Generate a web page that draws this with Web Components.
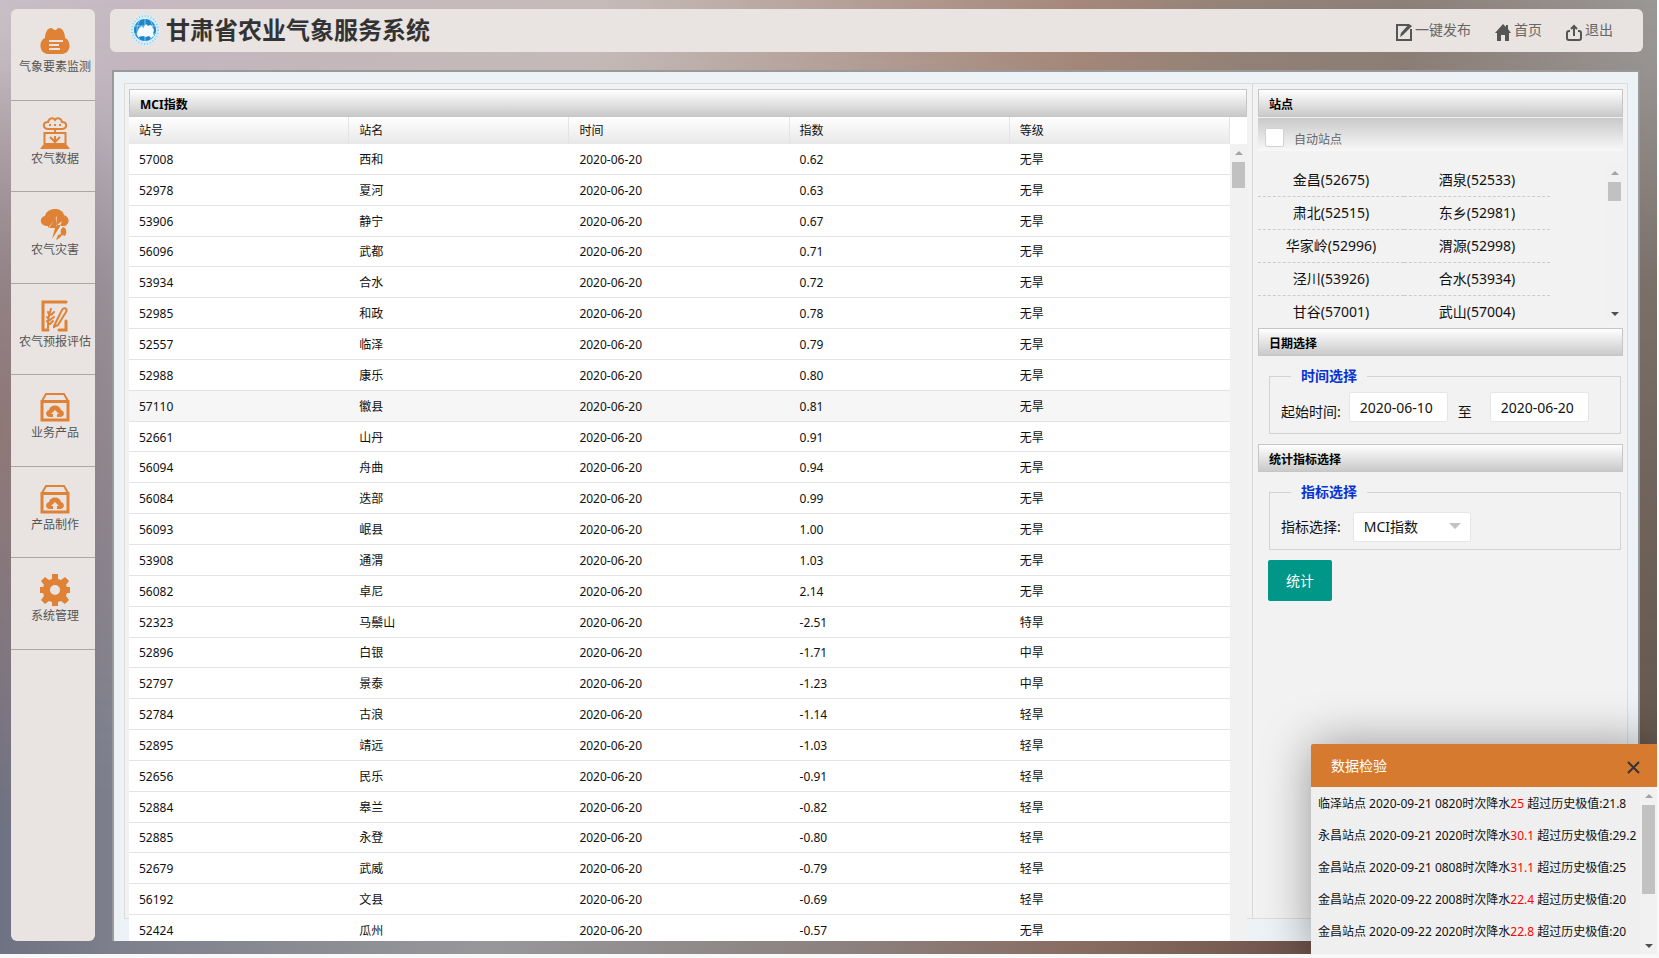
<!DOCTYPE html>
<html lang="zh-CN">
<head>
<meta charset="utf-8">
<title>甘肃省农业气象服务系统</title>
<style>
html, body { height: 100%; margin: 0; background: #f8f8f9; }
body { font: 12px/20px "Noto Sans", "Noto Sans CJK SC", sans-serif; color: #111; }
</style>
</head>
<body>
<weather-app></weather-app>

<script>
const define = (name, html, setup) => {
  const tpl = document.createElement('template');
  tpl.innerHTML = html;
  customElements.define(name, class extends HTMLElement {
    constructor() {
      super();
      this.attachShadow({ mode: 'open' }).append(tpl.content.cloneNode(true));
    }
    connectedCallback() { if (setup) setup(this, this.shadowRoot); }
  });
};

const O = '#df8236';
const box = `<path fill="none" stroke="${O}" stroke-width="2" d="M2 10 6 3h18l4 7"/><path fill="none" stroke="${O}" stroke-width="3" d="M2 10.500h26v18.500H2z"/><path fill="${O}" d="M10 26c-5 0-5-6-1-7 1-6 11-6 12 0 4 1 4 7-1 7h-3v-3h2l-4-4-4 4h2v3z"/>`;
const ICONS = {
  cloud: `<path fill="${O}" d="M8 29C-2 28-1 15 5 13 5 7 8 3 11 3c2 0 2 2 4 2s2-2 4-2c3 0 6 4 6 10 6 2 7 15-3 16z"/><path stroke="#e9e4e1" stroke-width="2" d="M9 16h14M9 20h10M9 24h11"/>`,
  station: `<path fill="none" stroke="${O}" stroke-width="2" d="M8 12c-6-1-5-7 0-7 1-4 5-5 7-2 2-3 6-2 7 2 5 0 6 6 0 7zM15 12v3M4.500 16h21v11h-21z"/><path fill="${O}" d="M9 7h2v2H9zM14 7h2v2h-2zM19 7h2v2h-2zM3 28h24l3 4H0zM14 19h2v6h-2z"/><path fill="none" stroke="${O}" stroke-width="2" d="m10 20 5 5 5-5"/>`,
  storm: `<path fill="${O}" d="M8 18C-1 18-1 9 5 8 7-1 22-1 24 7c6 2 6 9 1 11l-5 0 2-5-6 5 0-8-8 10zM17 8 9 20l6 0-3 11 9-14h-5zM23 19c4 1 4 6 2 9l-3-1c-2 3-4 4-6 5l2-5 3-1c-1-3 0-5 2-7z"/>`,
  report: `<path fill="none" stroke="${O}" stroke-width="3" stroke-linecap="round" d="M26 2H3v28h5M19 30h7V21"/><path fill="none" stroke="${O}" stroke-width="2" stroke-linecap="round" d="m14 26 8-16c2-3 6-2 4 2L18 25l-4 2zM8 28c0-8 1-14 3-19M9 20l-2-3M9 24l-2-3M10 20l4-3M10 24l3-3M9 15l-1-3M11 15l3-3"/>`,
  box,
  gear: `<path fill="${O}" fill-rule="evenodd" d="M12 0h6v5l3 1 4-3 4 4-3 4 1 2h3v6h-3l-1 3 3 4-4 4-4-3-3 1v4h-6v-4l-3-1-4 3-4-4 3-4-1-3H0v-6h3l1-2-3-4 4-4 4 3 3-1zM15 11a5 5 0 1 0 0 10 5 5 0 0 0 0-10z"/>`
};

define('side-item', `<style>
:host { display: block; border-bottom: 1px solid #aaa8a6; box-sizing: border-box; }
a { display: flex; flex-direction: column; align-items: center; padding: 16px 0 0 4px; color: #555; text-decoration: none; white-space: nowrap; }
svg { width: 30px; height: 32px; display: block; }
</style><a href="#"><svg viewBox="0 0 30 32"></svg><slot></slot></a>`,
(el, root) => { root.querySelector('svg').innerHTML = ICONS[el.getAttribute('icon')]; });

define('side-nav', `<style>
:host { display: block; background: #e9e4e1; border-radius: 6px; }
nav { display: grid; grid-template-rows: repeat(7, 1fr); height: 641px; }
</style><nav>
<side-item icon="cloud">气象要素监测</side-item><side-item icon="station">农气数据</side-item>
<side-item icon="storm">农气灾害</side-item><side-item icon="report">农气预报评估</side-item>
<side-item icon="box">业务产品</side-item><side-item icon="box">产品制作</side-item>
<side-item icon="gear">系统管理</side-item></nav>`);

define('top-bar', `<style>
:host { display: flex; align-items: center; justify-content: space-between; height: 43px; box-sizing: border-box; padding: 0 30px 2px 20px; background: #e9e4e1; border-radius: 6px; }
.brand { display: flex; align-items: center; gap: 6px; }
h1 { margin: 0; font-size: 24px; line-height: 40px; font-weight: 700; color: #333; }
nav { display: flex; gap: 24px; font-size: 14px; }
a { display: flex; align-items: center; gap: 3px; color: #666; text-decoration: none; }
svg { display: block; }
a svg { margin-top: 4px; }
</style>
<div class="brand"><svg width="30" height="34" viewBox="0 0 30 34">
<ellipse cx="15" cy="17" rx="15" ry="16" fill="#d9eef7"/><ellipse cx="15" cy="17" rx="13" ry="14" fill="none" stroke="#8ccbe6" stroke-width="2" stroke-dasharray="1 2"/>
<circle cx="15" cy="17" r="11" fill="#1b86cc"/><path fill="none" stroke="#8cc8ea" d="M5 13h20M5 21h20M15 6v22M10 7c-4 6-4 14 0 20M20 7c4 6 4 14 0 20"/>
<path fill="#f4fafd" d="m7 20 2-5 3-2 1 2 3-4 2 2 3-1 3 5-1 3 1 3-3 2-2-2-3 1-3-1-5 1z"/></svg>
<h1>甘肃省农业气象服务系统</h1></div>
<nav>
<a href="#"><svg width="16" height="18" viewBox="0 0 16 18"><path fill="none" stroke="#555" stroke-width="2" d="M13 2H1v15h14V6"/><path fill="#555" d="m4 14 1-4 8-9 3 2-9 9z"/></svg>一键发布</a>
<a href="#"><svg width="16" height="18" viewBox="0 0 16 18"><path fill="#555" d="m8 1 3 3V2h2v4l3 4h-2v8h-4v-6H6v6H2v-8H0z"/></svg>首页</a>
<a href="#"><svg width="16" height="18" viewBox="0 0 16 18"><path fill="none" stroke="#555" stroke-width="2" d="M4 8H3Q1 8 1 10v5q0 2 2 2h10q2 0 2-2v-5q0-2-2-2h-1M8 13V3M5 6l3-3 3 3"/></svg>退出</a>
</nav>`);

define('title-strip', `<style>
:host { display: block; height: 28px; box-sizing: border-box; padding: 0 10px; border: 1px solid #c6c6c6; background: linear-gradient(#fff, #c9c9c9); line-height: 29px; font-weight: 700; color: #000; }
</style><slot></slot>`);

define('scroll-rail', `<style>
:host { display: flex; flex-direction: column; align-items: center; width: 17px; box-sizing: border-box; padding: 7px 0 6px; background: #f1f1f1; }
i { border: 4px solid transparent; border-top-width: 0; border-bottom-color: #a3a3a3; }
b { width: 13px; margin-top: 7px; height: var(--thumb, 26px); background: #c1c1c1; }
u { margin-top: auto; border: 4px solid transparent; border-bottom-width: 0; border-top-color: #505050; }
:host([cut]) u { display: none; }
</style><i></i><b></b><u></u>`);

const ROWS = `57008 西和 0.62 无旱|52978 夏河 0.63 无旱|53906 静宁 0.67 无旱|56096 武都 0.71 无旱|53934 合水 0.72 无旱|52985 和政 0.78 无旱|52557 临泽 0.79 无旱|52988 康乐 0.80 无旱|57110 徽县 0.81 无旱|52661 山丹 0.91 无旱|56094 舟曲 0.94 无旱|56084 迭部 0.99 无旱|56093 岷县 1.00 无旱|53908 通渭 1.03 无旱|56082 卓尼 2.14 无旱|52323 马鬃山 -2.51 特旱|52896 白银 -1.71 中旱|52797 景泰 -1.23 中旱|52784 古浪 -1.14 轻旱|52895 靖远 -1.03 轻旱|52656 民乐 -0.91 轻旱|52884 皋兰 -0.82 轻旱|52885 永登 -0.80 轻旱|52679 武威 -0.79 轻旱|56192 文县 -0.69 轻旱|52424 瓜州 -0.57 无旱`.split('|').map(r => r.split(' '));

define('index-table', `<style>
:host { display: flex; flex-direction: column; min-height: 0; }
.scroll { flex: 1; min-height: 0; display: grid; grid-template-columns: 1fr 17px; overflow: hidden; background: #fff; }
.view { min-height: 0; overflow: hidden; }
table { width: 100%; height: 829px; border-collapse: separate; border-spacing: 0; table-layout: fixed; }
th { height: 27px; padding: 0 10px; box-sizing: border-box; text-align: left; font-weight: 400; background: linear-gradient(#fff, #e8e8e8); border-right: 1px solid #e4e4e4; line-height: 20px; }
td { padding: 2px 10px 0; border-bottom: 1px solid #e4e4e4; line-height: 20px; }
tr.on td { background: #f6f6f6; }
scroll-rail { margin-top: 27px; }
</style><title-strip>MCI指数</title-strip>
<div class="scroll"><div class="view"><table><thead><tr><th>站号</th><th>站名</th><th>时间</th><th>指数</th><th>等级</th></tr></thead><tbody></tbody></table></div><scroll-rail cut></scroll-rail></div>`,
(el, root) => {
  root.querySelector('tbody').innerHTML = ROWS.map(([id, name, v, lv]) =>
    `<tr${id === '57110' ? ' class="on"' : ''}><td>${id}</td><td>${name}</td><td>2020-06-20</td><td>${v}</td><td>${lv}</td></tr>`).join('');
});

define('station-list', `<style>
:host { display: block; }
label { display: flex; align-items: center; gap: 10px; height: 33px; margin-top: 1px; padding: 6px 7px 0; box-sizing: border-box; background: linear-gradient(#c9c9c9, #f8f8f8); color: #666; }
input { appearance: none; width: 19px; height: 19px; margin: 0; box-sizing: border-box; background: #fff; border: 1px solid #d2d2d2; border-radius: 2px; }
span { padding-top: 4px; }
.list { display: flex; justify-content: space-between; height: 158px; margin: 13px 0 6px; overflow: hidden; }
ul { list-style: none; margin: 0; padding: 0; width: 80%; display: grid; grid-template-columns: 1fr 1fr; grid-auto-rows: 33px; font-size: 14px; }
li { box-sizing: border-box; text-align: center; line-height: 32px; border-bottom: 1px dashed #ccc; }
</style>
<label><input type="checkbox"><span>自动站点</span></label>
<div class="list"><ul><li>金昌(52675)</li><li>酒泉(52533)</li><li>肃北(52515)</li><li>东乡(52981)</li><li>华家岭(52996)</li><li>渭源(52998)</li><li>泾川(53926)</li><li>合水(53934)</li><li>甘谷(57001)</li><li>武山(57004)</li></ul>
<scroll-rail style="--thumb:19px"></scroll-rail></div>`);

define('query-form', `<style>
:host { display: block; font-size: 14px; }
title-strip { font-size: 12px; }
fieldset { margin: 10px 2px 10px 11px; padding: 0 11px; border: 1px solid #d2d2d2; height: 68px; box-sizing: border-box; min-width: 0; }
legend { margin-left: 10px; padding: 0 10px; line-height: 20px; color: #0a32d2; font-weight: 700; }
.row { display: flex; align-items: center; margin-top: 6px; }
label, .to { padding-top: 9px; }
input, select { height: 30px; box-sizing: border-box; border: 1px solid #e6e6e6; border-radius: 2px; background: #fff; font: inherit; color: #111; padding: 0 10px; margin: 0; }
input { width: 99px; }
label + input { margin-left: 8px; }
.to { margin: 0 10px; }
.pick { margin-left: 12px; position: relative; }
select { width: 118px; appearance: none; display: block; }
.pick::after { content: ""; position: absolute; right: 10px; top: 11px; border: 6px solid transparent; border-bottom-width: 0; border-top-color: #c2c2c2; }
.measure { margin-top: 10px; }
.measure label { padding-top: 0; }
button { margin-left: 10px; width: 64px; height: 41px; border: 0; border-radius: 2px; background: #009688; color: #fff; font: inherit; padding: 0; }
</style>
<title-strip>日期选择</title-strip>
<fieldset><legend>时间选择</legend><div class="row"><label for="from">起始时间:</label><input id="from" value="2020-06-10"><label class="to" for="to">至</label><input id="to" value="2020-06-20"></div></fieldset>
<title-strip>统计指标选择</title-strip>
<fieldset><legend>指标选择</legend><div class="row measure"><label for="idx">指标选择:</label><div class="pick"><select id="idx"><option>MCI指数</option></select></div></div></fieldset>
<button type="button">统计</button>`);

define('alert-popup', `<style>
:host { display: block; width: 346px; height: 210px; box-sizing: border-box; background: #efefef; border-radius: 2px 2px 0 0; box-shadow: 1px 1px 50px rgba(0,0,0,.4); overflow: hidden; }
header { display: flex; justify-content: space-between; align-items: center; height: 43px; padding: 0 17px 0 20px; background: #d57a2f; color: #fff; font-size: 14px; }
button { border: 0; padding: 0; background: none; display: block; margin-top: 4px; }
svg { display: block; }
.body { display: flex; justify-content: space-between; height: 167px; }
ul { list-style: none; margin: 0; padding: 1px 0 0 7px; white-space: nowrap; }
li { line-height: 32px; }
em { font-style: normal; color: #f00; }
</style>
<header><span>数据检验</span><button aria-label="关闭"><svg width="13" height="13" viewBox="0 0 13 13"><path stroke="#333" stroke-width="2" d="m1 1 11 11M12 1 1 12"/></svg></button></header>
<div class="body"><ul>
<li>临泽站点 2020-09-21 0820时次降水<em>25</em> 超过历史极值:21.8</li>
<li>永昌站点 2020-09-21 2020时次降水<em>30.1</em> 超过历史极值:29.2</li>
<li>金昌站点 2020-09-21 0808时次降水<em>31.1</em> 超过历史极值:25</li>
<li>金昌站点 2020-09-22 2008时次降水<em>22.4</em> 超过历史极值:20</li>
<li>金昌站点 2020-09-22 2020时次降水<em>22.8</em> 超过历史极值:20</li></ul>
<scroll-rail style="--thumb:89px"></scroll-rail></div>`);

define('weather-app', `<style>
:host { display: grid; grid-template-columns: 84px 1fr; gap: 15px; height: calc(100vh - 4px); margin-right: 2px; box-sizing: border-box; padding: 9px 14px 13px 11px; position: relative; isolation: isolate; overflow: hidden;
  background: linear-gradient(90deg, #6f7282, #7d7f8c 7%, #97979a 29%, #8c8280 50%, #886b60 66%, #6b5149 80%, #64574c); }
/* the lighter sky tones, fading out towards the ground */
:host::before { content: ""; position: absolute; inset: 0; z-index: -1;
  background: linear-gradient(90deg, #c8bfc6, #c7b8c1 8%, #c6bbb9 36%, #b0998f 55%, #a5887a 65%, #938378 75%, #8d8078 85%, #9a9796);
  -webkit-mask-image: linear-gradient(#000, rgba(0,0,0,.95) 7%, rgba(0,0,0,.4) 30%, rgba(0,0,0,.15) 60%, transparent 85%);
  mask-image: linear-gradient(#000, rgba(0,0,0,.95) 7%, rgba(0,0,0,.4) 30%, rgba(0,0,0,.15) 60%, transparent 85%); }
/* warm tint along the left edge */
:host::after { content: ""; position: absolute; inset: 0; z-index: -1;
  background: radial-gradient(ellipse 160px 400px at 0 45%, rgba(146,112,106,.7), transparent); }
main { display: flex; flex-direction: column; min-width: 0; min-height: 0; }
.frame { flex: 1; min-height: 0; display: flex; margin: 18px 3px 0 2px; padding: 11px 10px 22px; border: 2px solid #999; border-bottom: 0; background: #edf2f6; overflow: hidden; }
.panel { flex: 1; min-width: 0; display: grid; grid-template-columns: minmax(0, 1fr) 375px; border: 1px solid #dcdcdc; background: #f2f2f2; }
index-table { margin: 5px 5px -23px 4px; }
aside { border-left: 1px solid #d8d8d8; padding: 5px 4px 0 5px; }
alert-popup { position: absolute; right: 0; bottom: 0; }
</style>
<side-nav></side-nav>
<main><top-bar></top-bar>
<div class="frame"><div class="panel"><index-table></index-table>
<aside><title-strip>站点</title-strip><station-list></station-list><query-form></query-form></aside></div></div></main>
<alert-popup></alert-popup>`);
</script>
</body>
</html>
